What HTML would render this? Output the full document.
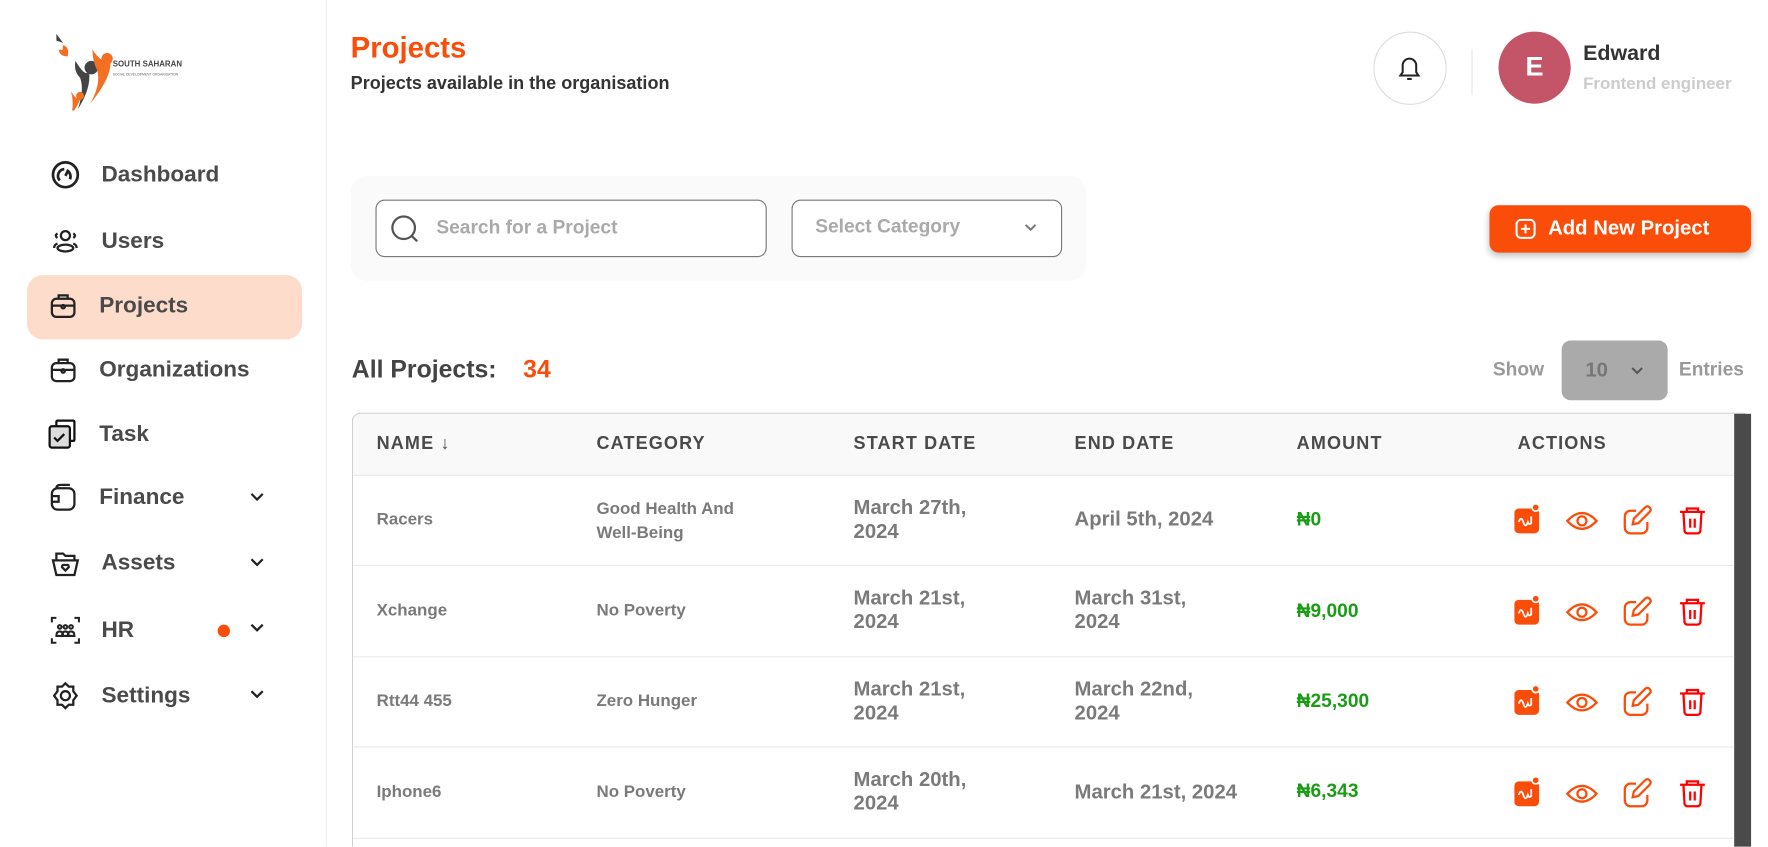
<!DOCTYPE html>
<html><head><meta charset="utf-8"><style>
*{box-sizing:border-box;margin:0;padding:0}
html,body{width:1768px;height:847px;overflow:hidden;background:#fff}
#w{position:absolute;left:0;top:0;width:1568px;height:751px;transform:scale(1.12755);transform-origin:0 0;font-family:"Liberation Sans",sans-serif;color:#4a4a4a;overflow:hidden}
.abs{position:absolute}
.side{left:0;top:0;width:290px;height:751px;border-right:1px solid #eee}
.nav{position:absolute;left:44px;font-size:20px;font-weight:bold;color:#4a4a4a;display:flex;align-items:center}
.nav svg{width:28px;height:28px;margin-right:18px}
.chev{position:absolute;left:220px;width:16px;height:16px}
.th{position:absolute;top:385px;font-size:16px;font-weight:bold;letter-spacing:1px;color:#4a4a4a}
.cell{position:absolute;font-weight:bold;color:#7a7a7a}
.amt{position:absolute;font-weight:bold;color:#1a9c14;font-size:17px;left:1150px}
.line{position:absolute;left:313px;width:1225px;height:1px;background:#e6ebf0}
</style></head><body><div id="w">
<div class="abs side"></div>
<svg class="abs" style="left:42px;top:28px" width="60" height="70" viewBox="0 0 60 70">
<path d="M8 2 l6 8 -6 -2z" fill="#444"/><path d="M14 12 q6 2 4 10 q-6 -3 -4 -10z" fill="#f36f21"/><path d="M10 16 q8 0 8 6 q-7 0 -8 -6z" fill="#f36f21"/>
<circle cx="39" cy="32" r="6" fill="#444"/><path d="M25 26 q8 14 12 10 q2 14 -10 33 q6 -18 2 -28 q-6 -6 -4 -15z" fill="#444"/>
<circle cx="53" cy="24" r="5" fill="#f36f21"/><path d="M40 16 q8 12 16 12 q0 14 -18 36 q10 -18 6 -30 q-4 -8 -4 -18z" fill="#f36f21"/>
<circle cx="29" cy="57" r="3.5" fill="#f36f21"/><path d="M21 53 q4 7 8 7 q-2 6 -8 14 q3 -10 0 -21z" fill="#f36f21"/>
</svg>
<div class="abs" style="left:100px;top:54px;font-size:7px;color:#444;font-weight:bold">SOUTH SAHARAN</div>
<div class="abs" style="left:100px;top:64px;font-size:3px;color:#666">SOCIAL DEVELOPMENT ORGANISATION</div>

<div class="abs" style="left:24px;top:244px;width:244px;height:57px;background:#fddccc;border-radius:14px"></div>
<div class="nav" style="top:141px"><svg viewBox="0 0 28 28" fill="none" stroke="#222" stroke-width="2.4"><circle cx="14" cy="14" r="11"/><path d="M9 19 a6 6 0 0 1 4 -10M15 10 a6 6 0 0 1 3 8M14 15 l2 -4"/></svg>Dashboard</div>
<div class="nav" style="top:200px"><svg viewBox="0 0 28 28" fill="none" stroke="#222" stroke-width="2"><circle cx="14" cy="9" r="4"/><ellipse cx="14" cy="20" rx="7" ry="3"/><path d="M7 7 q-3 2 0 4M21 7 q3 2 0 4M4 20 q0-3 3-4M24 20 q0-3-3-4"/></svg>Users</div>
<div class="nav" style="top:257px;left:42px"><svg viewBox="0 0 28 28" fill="none" stroke="#222" stroke-width="2"><rect x="4" y="8" width="20" height="16" rx="4"/><path d="M10 8 v-3 h8 v3M4 14 h20"/><circle cx="14" cy="15" r="1.5"/></svg>Projects</div>
<div class="nav" style="top:314px;left:42px"><svg viewBox="0 0 28 28" fill="none" stroke="#222" stroke-width="2"><rect x="4" y="8" width="20" height="16" rx="4"/><path d="M10 8 v-3 h8 v3M4 14 h20"/><circle cx="14" cy="15" r="1.5"/></svg>Organizations</div>
<div class="nav" style="top:371px;left:42px"><svg viewBox="0 0 28 28" fill="none" stroke="#111" stroke-width="2"><rect x="8" y="2" width="16" height="18" rx="1"/><rect x="2" y="7" width="18" height="19" rx="2" fill="#ddd"/><path d="M6 17 l3 3 6 -6"/></svg>Task</div>
<div class="nav" style="top:427px;left:42px"><svg viewBox="0 0 28 28" fill="none" stroke="#222" stroke-width="2"><rect x="4" y="6" width="20" height="19" rx="5"/><path d="M4 13 h6 v5 h-6M8 6 q0-3 4-3 h8"/></svg>Finance</div>
<div class="nav" style="top:485px;left:44px"><svg viewBox="0 0 28 28" fill="none" stroke="#222" stroke-width="2"><path d="M3 12 l3 13 h16 l3 -13z M6 12 v-6 h6 l2 2 h8 v4"/><path d="M14 21 l-3-3 q0-2 1.5-2 t1.5 1 q0-1 1.5-1 t1.5 2z"/></svg>Assets</div>
<div class="nav" style="top:545px;left:44px"><svg viewBox="0 0 28 28" fill="none" stroke="#222" stroke-width="1.8"><path d="M2 7 v-4 h4M22 3 h4 v4M2 21 v4 h4M26 21 v4 h-4"/><circle cx="9" cy="11" r="1.6"/><circle cx="14" cy="11" r="1.6"/><circle cx="19" cy="11" r="1.6"/><path d="M6 19 q0-4 3-4 q3 0 3 4zM11 19 q0-4 3-4 q3 0 3 4zM16 19 q0-4 3-4 q3 0 3 4z"/></svg>HR</div>
<div class="abs" style="left:193px;top:554px;width:11px;height:11px;border-radius:50%;background:#fa4d09"></div>
<div class="nav" style="top:603px;left:44px"><svg viewBox="0 0 28 28" fill="none" stroke="#222" stroke-width="2"><circle cx="14" cy="14" r="4"/><path d="M14 3 l3 3 h4 v4 l3 4 -3 4 v4 h-4 l-3 3 -3-3 h-4 v-4 l-3-4 3-4 v-4 h4z"/></svg>Settings</div>
<svg class="chev" style="top:433px" viewBox="0 0 16 16" fill="none" stroke="#222" stroke-width="2"><path d="M3 5 l5 5 5-5"/></svg>
<svg class="chev" style="top:491px" viewBox="0 0 16 16" fill="none" stroke="#222" stroke-width="2"><path d="M3 5 l5 5 5-5"/></svg>
<svg class="chev" style="top:549px" viewBox="0 0 16 16" fill="none" stroke="#222" stroke-width="2"><path d="M3 5 l5 5 5-5"/></svg>
<svg class="chev" style="top:608px" viewBox="0 0 16 16" fill="none" stroke="#222" stroke-width="2"><path d="M3 5 l5 5 5-5"/></svg>

<div class="abs" style="left:311px;top:27px;font-size:26px;font-weight:bold;color:#fa4d09">Projects</div>
<div class="abs" style="left:311px;top:66px;font-size:16px;font-weight:bold;color:#333">Projects available in the organisation</div>
<div class="abs" style="left:1218px;top:28px;width:65px;height:65px;border:1px solid #ddd;border-radius:50%"></div>
<svg class="abs" style="left:1238px;top:48px" width="24" height="26" viewBox="0 0 24 26" fill="none" stroke="#222" stroke-width="1.8"><path d="M4 19 h16 l-2-3 v-6 a6 6 0 0 0-12 0 v6z M10 22 h4"/></svg>
<div class="abs" style="left:1305px;top:44px;width:1px;height:40px;background:#e6e6e6"></div>
<div class="abs" style="left:1329px;top:28px;width:64px;height:64px;border-radius:50%;background:#c45468;color:#fff;font-size:24px;font-weight:bold;text-align:center;line-height:64px">E</div>
<div class="abs" style="left:1404px;top:37px;font-size:19px;font-weight:bold;color:#333">Edward</div>
<div class="abs" style="left:1404px;top:66px;font-size:15px;font-weight:bold;color:#ccc">Frontend engineer</div>

<div class="abs" style="left:311px;top:156px;width:652px;height:93px;background:#fafafa;border-radius:14px"></div>
<div class="abs" style="left:333px;top:177px;width:347px;height:51px;border:1px solid #777;border-radius:8px;background:#fff"></div>
<svg class="abs" style="left:346px;top:190px" width="26" height="26" viewBox="0 0 26 26" fill="none" stroke="#555" stroke-width="2"><circle cx="12" cy="12" r="10"/><path d="M19 19 l5 5"/></svg>
<div class="abs" style="left:387px;top:192px;font-size:17px;font-weight:bold;color:#aaa">Search for a Project</div>
<div class="abs" style="left:702px;top:177px;width:240px;height:51px;border:1px solid #777;border-radius:8px;background:#fff"></div>
<div class="abs" style="left:723px;top:191px;font-size:17px;font-weight:bold;color:#aaa">Select Category</div>
<svg class="abs" style="left:907px;top:195px" width="14" height="14" viewBox="0 0 16 16" fill="none" stroke="#777" stroke-width="2"><path d="M3 5 l5 5 5-5"/></svg>
<div class="abs" style="left:1321px;top:182px;width:232px;height:42px;background:#fa4d09;border-radius:8px;box-shadow:0 3px 6px rgba(0,0,0,.25)"></div>
<svg class="abs" style="left:1343px;top:193px" width="20" height="20" viewBox="0 0 20 20" fill="none" stroke="#fff" stroke-width="1.8"><rect x="2" y="2" width="16" height="16" rx="4"/><path d="M10 6 v8 M6 10 h8"/></svg>
<div class="abs" style="left:1373px;top:192px;font-size:18px;font-weight:bold;color:#fff">Add New Project</div>

<div class="abs" style="left:312px;top:315px;font-size:22px;font-weight:bold;color:#444">All Projects:</div>
<div class="abs" style="left:464px;top:315px;font-size:22px;font-weight:bold;color:#fa4d09">34</div>
<div class="abs" style="left:1324px;top:318px;font-size:17px;font-weight:bold;color:#999">Show</div>
<div class="abs" style="left:1385px;top:302px;width:94px;height:53px;background:#aaa;border-radius:8px"></div>
<div class="abs" style="left:1406px;top:318px;font-size:18px;font-weight:bold;color:#777">10</div>
<svg class="abs" style="left:1445px;top:322px" width="14" height="14" viewBox="0 0 16 16" fill="none" stroke="#555" stroke-width="2"><path d="M3 5 l5 5 5-5"/></svg>
<div class="abs" style="left:1489px;top:318px;font-size:17px;font-weight:bold;color:#999">Entries</div>

<div class="abs" style="left:312px;top:366px;width:1241px;height:385px;border:1px solid #ccc;border-bottom:none;border-radius:8px 8px 0 0;overflow:hidden">
 <div style="height:55px;background:#f9f9f9;border-bottom:1px solid #e6ebf0"></div>
</div>
<div class="abs" style="left:1538px;top:367px;width:15px;height:384px;background:#4a4a4a"></div>
<div class="th" style="left:334px">NAME ↓</div>
<div class="th" style="left:529px">CATEGORY</div>
<div class="th" style="left:757px">START DATE</div>
<div class="th" style="left:953px">END DATE</div>
<div class="th" style="left:1150px">AMOUNT</div>
<div class="th" style="left:1346px">ACTIONS</div>
<div class="line" style="top:501px"></div><div class="line" style="top:582px"></div><div class="line" style="top:662px"></div><div class="line" style="top:743px"></div>

<div class="cell" style="left:334px;top:452px;font-size:15px">Racers</div>
<div class="cell" style="left:529px;top:441px;font-size:15px;line-height:21px">Good Health And<br>Well-Being</div>
<div class="cell" style="left:757px;top:440px;font-size:18px;line-height:21px">March 27th,<br>2024</div>
<div class="cell" style="left:953px;top:450px;font-size:18px">April 5th, 2024</div>
<div class="amt" style="top:451px">₦0</div>

<div class="cell" style="left:334px;top:533px;font-size:15px">Xchange</div>
<div class="cell" style="left:529px;top:533px;font-size:15px">No Poverty</div>
<div class="cell" style="left:757px;top:520px;font-size:18px;line-height:21px">March 21st,<br>2024</div>
<div class="cell" style="left:953px;top:520px;font-size:18px;line-height:21px">March 31st,<br>2024</div>
<div class="amt" style="top:532px">₦9,000</div>

<div class="cell" style="left:334px;top:613px;font-size:15px">Rtt44 455</div>
<div class="cell" style="left:529px;top:613px;font-size:15px">Zero Hunger</div>
<div class="cell" style="left:757px;top:601px;font-size:18px;line-height:21px">March 21st,<br>2024</div>
<div class="cell" style="left:953px;top:601px;font-size:18px;line-height:21px">March 22nd,<br>2024</div>
<div class="amt" style="top:612px">₦25,300</div>

<div class="cell" style="left:334px;top:694px;font-size:15px">Iphone6</div>
<div class="cell" style="left:529px;top:694px;font-size:15px">No Poverty</div>
<div class="cell" style="left:757px;top:681px;font-size:18px;line-height:21px">March 20th,<br>2024</div>
<div class="cell" style="left:953px;top:692px;font-size:18px">March 21st, 2024</div>
<div class="amt" style="top:692px">₦6,343</div>

<svg width="0" height="0" style="position:absolute"><defs>
<g id="acts">
<rect x="0" y="5" width="22" height="22" rx="4" fill="#fa4d09"/><circle cx="19" cy="4" r="4" fill="#fff"/><circle cx="19" cy="4" r="2.5" fill="#fa4d09"/><path d="M4 17 q2-6 4 0 t4 0 q1 3 3 1 v-6" fill="none" stroke="#fff" stroke-width="1.6"/>
<path d="M47 16 q13-14 26 0 q-13 14-26 0z" fill="none" stroke="#fa4d09" stroke-width="2"/><circle cx="60" cy="16" r="4" fill="none" stroke="#fa4d09" stroke-width="2"/>
<path d="M108 7 h-5 a5 5 0 0 0-5 5 v10 a5 5 0 0 0 5 5 h10 a5 5 0 0 0 5-5 v-5" fill="none" stroke="#fa4d09" stroke-width="2"/><path d="M105 19 l1-5 10-10 q2-2 4 0 t0 4 l-10 10z" fill="none" stroke="#fa4d09" stroke-width="2"/>
<path d="M147 8 h22 M153 8 v-3 h10 v3 M150 8 l1 17 a3 3 0 0 0 3 2 h8 a3 3 0 0 0 3-2 l1-17 M156 14 v8 M160 14 v8" fill="none" stroke="#f00" stroke-width="2"/>
</g></defs></svg>
<svg class="abs" style="left:1343px;top:446px" width="175" height="30"><use href="#acts"/></svg>
<svg class="abs" style="left:1343px;top:527px" width="175" height="30"><use href="#acts"/></svg>
<svg class="abs" style="left:1343px;top:607px" width="175" height="30"><use href="#acts"/></svg>
<svg class="abs" style="left:1343px;top:688px" width="175" height="30"><use href="#acts"/></svg>
</div></body></html>
